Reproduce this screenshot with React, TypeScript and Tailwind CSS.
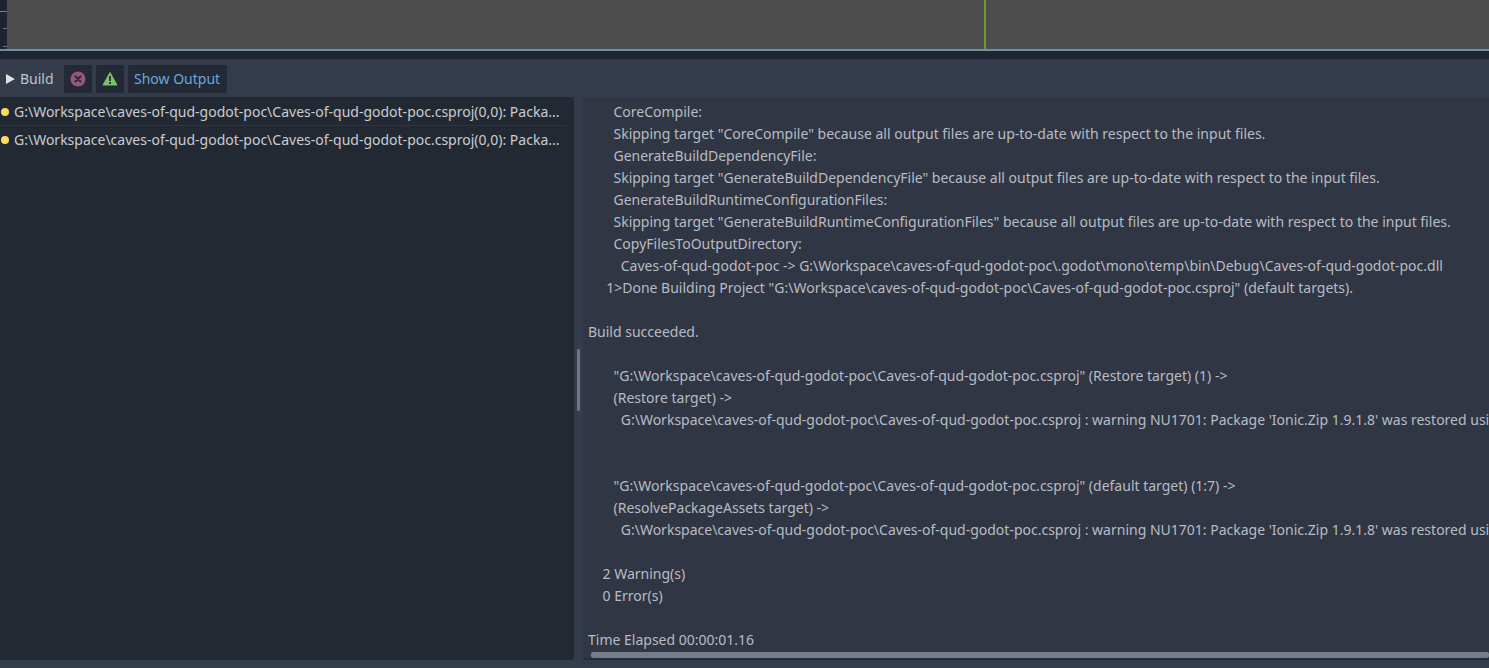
import React from "react";

const lines = [
  "       CoreCompile:",
  '       Skipping target "CoreCompile" because all output files are up-to-date with respect to the input files.',
  "       GenerateBuildDependencyFile:",
  '       Skipping target "GenerateBuildDependencyFile" because all output files are up-to-date with respect to the input files.',
  "       GenerateBuildRuntimeConfigurationFiles:",
  '       Skipping target "GenerateBuildRuntimeConfigurationFiles" because all output files are up-to-date with respect to the input files.',
  "       CopyFilesToOutputDirectory:",
  "         Caves-of-qud-godot-poc -> G:\\Workspace\\caves-of-qud-godot-poc\\.godot\\mono\\temp\\bin\\Debug\\Caves-of-qud-godot-poc.dll",
  '     1>Done Building Project "G:\\Workspace\\caves-of-qud-godot-poc\\Caves-of-qud-godot-poc.csproj" (default targets).',
  " ",
  "Build succeeded.",
  " ",
  '       "G:\\Workspace\\caves-of-qud-godot-poc\\Caves-of-qud-godot-poc.csproj" (Restore target) (1) ->',
  "       (Restore target) ->",
  "         G:\\Workspace\\caves-of-qud-godot-poc\\Caves-of-qud-godot-poc.csproj : warning NU1701: Package 'Ionic.Zip 1.9.1.8' was restored usi",
  " ",
  " ",
  '       "G:\\Workspace\\caves-of-qud-godot-poc\\Caves-of-qud-godot-poc.csproj" (default target) (1:7) ->',
  "       (ResolvePackageAssets target) ->",
  "         G:\\Workspace\\caves-of-qud-godot-poc\\Caves-of-qud-godot-poc.csproj : warning NU1701: Package 'Ionic.Zip 1.9.1.8' was restored usi",
  " ",
  "    2 Warning(s)",
  "    0 Error(s)",
  " ",
  "Time Elapsed 00:00:01.16",
];

const issue = "G:\\Workspace\\caves-of-qud-godot-poc\\Caves-of-qud-godot-poc.csproj(0,0): Packa...";

function Issue({ border }: { border?: boolean }) {
  return (
    <div className={`flex h-[28px] items-center ${border ? "mt-px mr-[7px] border-b border-[#2e3440]" : ""}`}>
      <span className="ml-px h-[8px] w-[8px] shrink-0 rounded-full bg-[#fbdc62]" />
      <span className="ml-[5px] whitespace-pre text-[#c9ccd2]">{issue}</span>
    </div>
  );
}

export default function App() {
  return (
    <div className="flex h-[668px] w-[1489px] flex-col overflow-hidden bg-[#343b4a] font-['Noto_Sans',sans-serif] text-[14px] leading-[22px]">
      <div className="flex h-[49px] shrink-0">
        <div className="relative w-[7px] shrink-0 bg-[#1f2530]">
          <span className="absolute left-0 top-[11px] h-px w-[7px] bg-[#7d828b]" />
          <span className="absolute left-[3px] top-[28px] h-px w-[4px] bg-[#6f747d]" />
          <span className="absolute left-[3px] top-[46px] h-px w-[4px] bg-[#6f747d]" />
        </div>
        <div className="relative flex-1 bg-[#4d4d4d]">
          <span className="absolute left-[977px] top-0 h-full w-[2px] bg-[#6f9a2c]" />
        </div>
      </div>
      <div className="h-[2px] shrink-0 bg-[#6f8fa9]" />
      <div className="h-[8px] shrink-0 bg-[#1c2530]" />
      <div className="mt-[6px] flex h-[28px] shrink-0 items-center">
        <svg width="9" height="10" viewBox="0 0 9 10" className="ml-[6px]">
          <path d="M0 0 L9 5 L0 10 Z" fill="#e0e0e0" />
        </svg>
        <span className="ml-[5px] text-[#c0c3c9]">Build</span>
        <div className="ml-[10px] flex h-[28px] w-[28px] items-center justify-center rounded-[2px] bg-[#232a35]">
          <svg width="16" height="16" viewBox="0 0 16 16">
            <circle cx="8" cy="8" r="7.5" fill="#96567f" />
            <path d="M5.5 5.5 L10.5 10.5 M10.5 5.5 L5.5 10.5" stroke="#2a2a38" strokeWidth="2.2" strokeLinecap="round" />
          </svg>
        </div>
        <div className="ml-[4px] flex h-[28px] w-[28px] items-center justify-center rounded-[2px] bg-[#232a35]">
          <svg width="16" height="16" viewBox="0 0 16 16">
            <path d="M8 1.5 L15 14 L1 14 Z" fill="#79c267" stroke="#79c267" strokeLinejoin="round" />
            <rect x="7.1" y="5" width="1.8" height="5" fill="#232a35" />
            <rect x="7.1" y="11" width="1.8" height="2" fill="#232a35" />
          </svg>
        </div>
        <div className="ml-[4px] flex h-[28px] w-[99px] items-center justify-center rounded-[2px] bg-[#232a35] text-[#6aa8dd]">
          Show Output
        </div>
      </div>
      <div className="mt-[4px] flex h-[563px] shrink-0">
        <div className="h-full w-[574px] shrink-0 overflow-hidden rounded-r-[2px] bg-[#232933]">
          <Issue border />
          <Issue />
        </div>
        <div className="relative w-[9px] shrink-0">
          <span className="absolute left-[3px] top-[252px] h-[62px] w-[3px] rounded-[1px] bg-[#6f7686]" />
        </div>
        <div className="relative flex-1 overflow-hidden bg-[#303643] pl-[5px] pt-[4px]">
          {lines.map((l, i) => (
            <div key={i} className="h-[22px] whitespace-pre text-[#b8bcc4]">
              {l}
            </div>
          ))}
          <div className="absolute bottom-0 left-0 right-0 h-[8px] border-b-2 border-[#262c37]">
            <div className="ml-[8px] h-[6px] rounded-[2px] bg-[#767d88]" />
          </div>
        </div>
      </div>
    </div>
  );
}
